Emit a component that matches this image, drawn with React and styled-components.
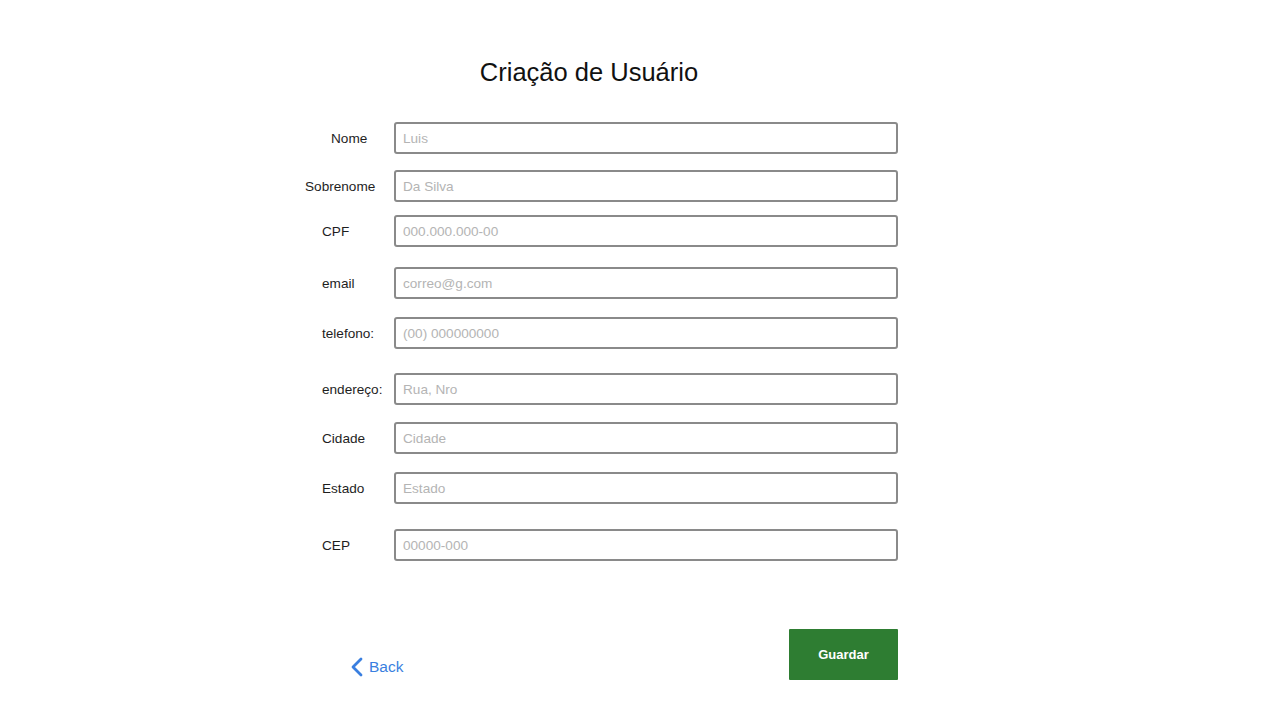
import React from "react";
import styled, { createGlobalStyle } from "styled-components";

const Global = createGlobalStyle`
  html, body { margin: 0; padding: 0; background: #ffffff; }
  body { font-family: "Liberation Sans", Arial, sans-serif; color: #222; }
  * { box-sizing: border-box; }
`;

const Page = styled.div`
  width: 1280px;
  height: 720px;
  padding: 58px 0 0 305px;
`;

const Container = styled.div`
  width: 593px;
  display: flex;
  flex-direction: column;
`;

const Title = styled.h1`
  margin: 0 25px 0 0;
  font-size: 25.5px;
  line-height: 28px;
  font-weight: 400;
  color: #111;
  text-align: center;
`;

const Form = styled.form`
  display: flex;
  flex-direction: column;
  margin-top: 36px;
`;

const Row = styled.div`
  display: grid;
  grid-template-columns: 89px 1fr;
  align-items: center;
  margin-top: ${(p) => p.$gap}px;
`;

const Label = styled.label`
  font-size: 13.6px;
  color: #1e1e1e;
  padding-left: ${(p) => p.$indent}px;
  white-space: nowrap;
`;

const Input = styled.input`
  height: 32px;
  width: 504px;
  border: 2px solid #8a8a8a;
  border-radius: 3px;
  padding: 0 7px;
  font-family: "Liberation Sans", Arial, sans-serif;
  font-size: 13.6px;
  color: #333;
  outline: none;
  &::placeholder { color: #b4b4b4; }
`;

const Footer = styled.div`
  display: flex;
  justify-content: space-between;
  align-items: flex-end;
  margin-top: 68px;
  padding-left: 45px;
`;

const BackLink = styled.a`
  display: flex;
  align-items: center;
  gap: 5px;
  margin-bottom: 3px;
  color: #3a7fe0;
  font-size: 15.5px;
  text-decoration: none;
  cursor: pointer;
`;

const SaveButton = styled.button`
  width: 109px;
  height: 51px;
  background: #2e7d32;
  color: #fff;
  border: none;
  border-radius: 1px;
  font-family: "Liberation Sans", Arial, sans-serif;
  font-weight: 700;
  font-size: 13px;
  cursor: pointer;
`;

const fields = [
  { label: "Nome", ph: "Luis", gap: 0, indent: 26 },
  { label: "Sobrenome", ph: "Da Silva", gap: 16, indent: 0 },
  { label: "CPF", ph: "000.000.000-00", gap: 13, indent: 17 },
  { label: "email", ph: "correo@g.com", gap: 20, indent: 17 },
  { label: "telefono:", ph: "(00) 000000000", gap: 18, indent: 17 },
  { label: "endereço:", ph: "Rua, Nro", gap: 24, indent: 17 },
  { label: "Cidade", ph: "Cidade", gap: 17, indent: 17 },
  { label: "Estado", ph: "Estado", gap: 18, indent: 17 },
  { label: "CEP", ph: "00000-000", gap: 25, indent: 17 },
];

export default function App() {
  return (
    <Page>
      <Global />
      <Container>
        <Title>Criação de Usuário</Title>
        <Form onSubmit={(e) => e.preventDefault()}>
          {fields.map((f) => (
            <Row key={f.label} $gap={f.gap}>
              <Label $indent={f.indent}>{f.label}</Label>
              <Input placeholder={f.ph} />
            </Row>
          ))}
        </Form>
        <Footer>
          <BackLink>
            <svg width="14" height="20" viewBox="0 0 14 20">
              <polyline
                points="11,2 3,10 11,18"
                fill="none"
                stroke="#3a7fe0"
                strokeWidth="2.8"
                strokeLinecap="round"
                strokeLinejoin="round"
              />
            </svg>
            Back
          </BackLink>
          <SaveButton>Guardar</SaveButton>
        </Footer>
      </Container>
    </Page>
  );
}
